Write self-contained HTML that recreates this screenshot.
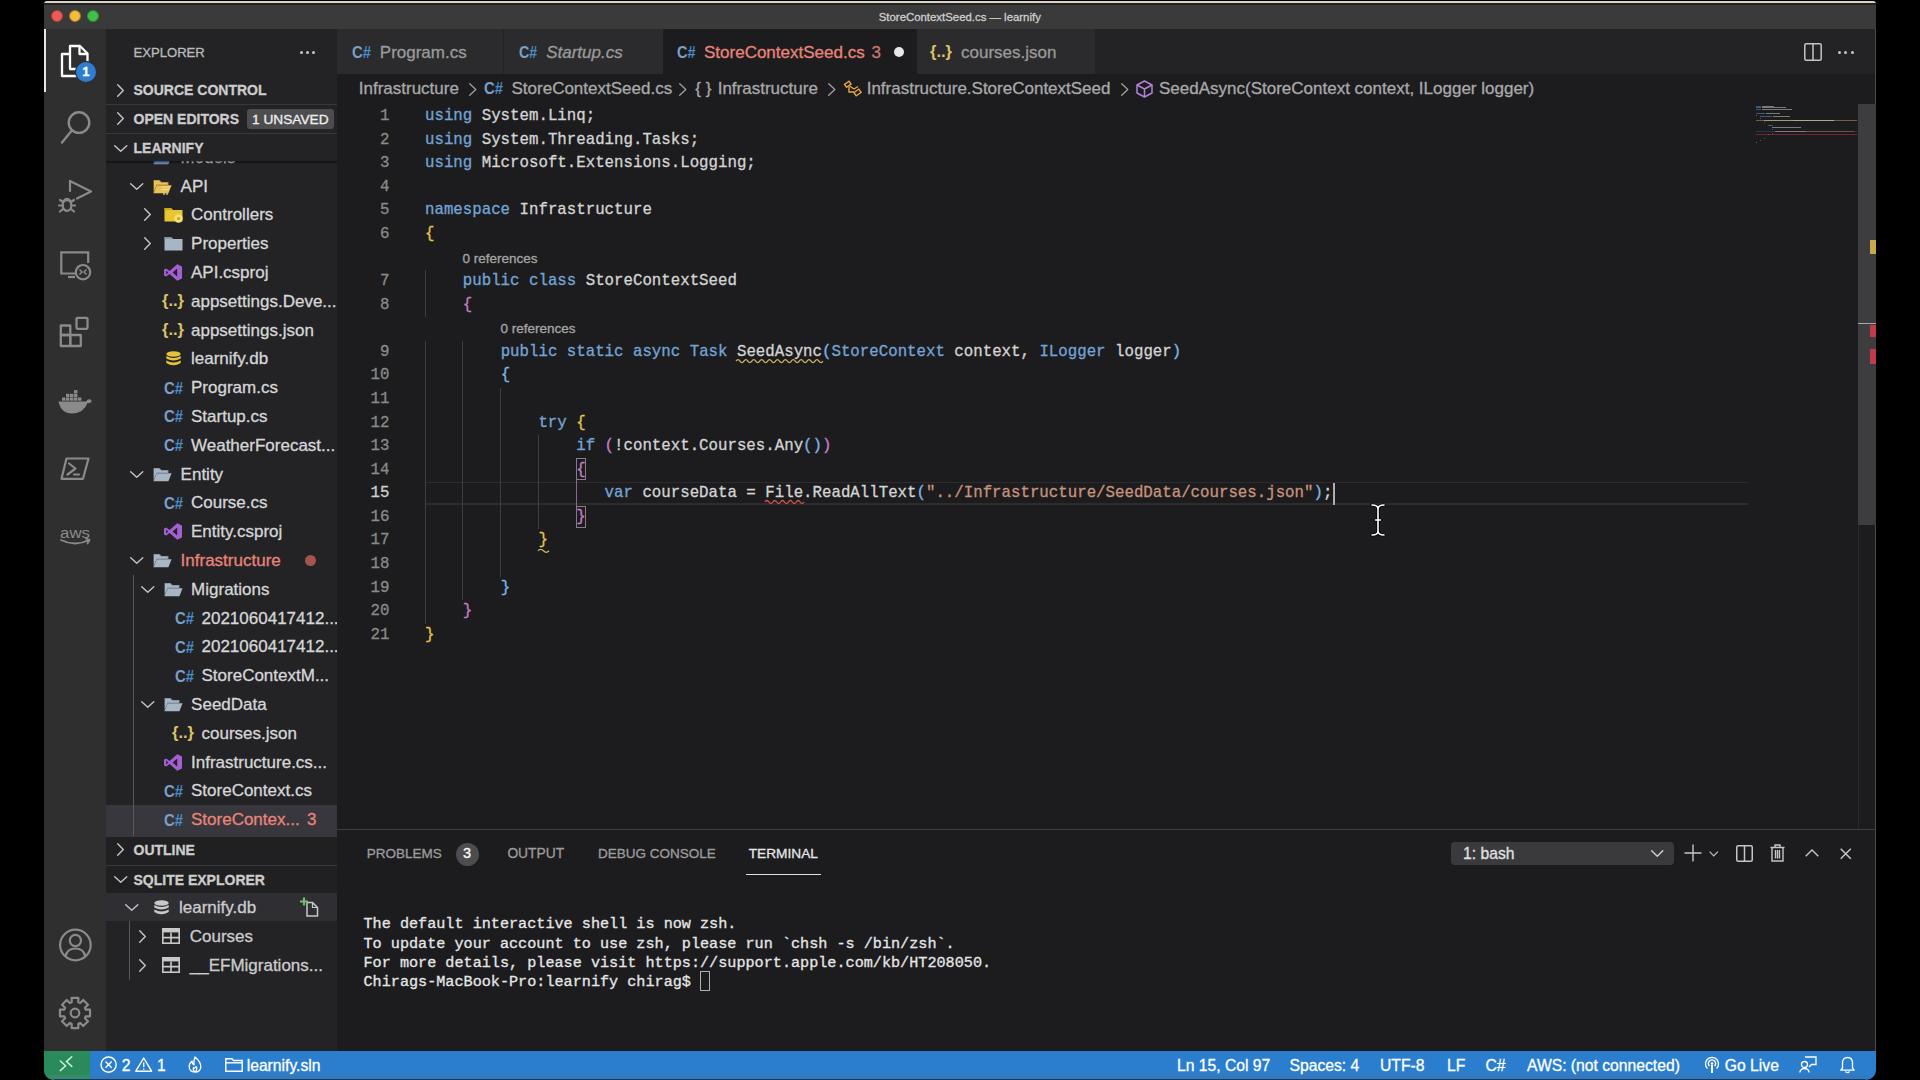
<!DOCTYPE html><html><head><meta charset="utf-8"><style>
html,body{margin:0;padding:0}
body{width:1920px;height:1080px;background:#000;position:relative;overflow:hidden;font-family:"Liberation Sans",sans-serif}
.t{position:absolute;white-space:pre;-webkit-text-stroke:0.3px currentColor}
.t span{-webkit-text-stroke:0.3px currentColor}
.r{position:absolute}
svg.r{overflow:visible}
</style></head><body>
<div class="r" style="left:44.00px;top:1.00px;width:1832.00px;height:1079.00px;background:#1c1c1e;border-radius:10px 10px 10px 10px;"></div>
<div class="r" style="left:44.00px;top:1.00px;width:1832.00px;height:3.00px;background:#d9d3bf;border-radius:10px 10px 0 0;"></div>
<div class="r" style="left:44.00px;top:3.00px;width:1832.00px;height:2.00px;background:#222;"></div>
<div class="r" style="left:44.00px;top:5.00px;width:1832.00px;height:24.00px;background:#3a3a3a;"></div>
<div class="r" style="left:50.8px;top:9.8px;width:12.4px;height:12.4px;box-sizing:border-box;border:0.8px solid #b03a36;border-radius:50%;background:#ee5a57"></div>
<div class="r" style="left:68.8px;top:9.8px;width:12.4px;height:12.4px;box-sizing:border-box;border:0.8px solid #a8782a;border-radius:50%;background:#f4b93f"></div>
<div class="r" style="left:86.8px;top:9.8px;width:12.4px;height:12.4px;box-sizing:border-box;border:0.8px solid #2a8a30;border-radius:50%;background:#40c04a"></div>
<div class="t" style="left:878.75px;top:11.95px;font-size:11.4px;line-height:11.4px;color:#cfcfcf;">StoreContextSeed.cs — learnify</div>
<div class="r" style="left:44.00px;top:29.00px;width:62.00px;height:1022.00px;background:#2f2f2f;"></div>
<div class="r" style="left:44.00px;top:29.00px;width:2.20px;height:63.00px;background:#e6e6e6;"></div>
<div class="r" style="left:106.00px;top:29.00px;width:231.00px;height:1022.00px;background:#232326;"></div>
<div class="r" style="left:337.00px;top:29.00px;width:1539.00px;height:45.00px;background:#232326;"></div>
<div class="r" style="left:337.00px;top:74.00px;width:1539.00px;height:755.00px;background:#1c1c1e;"></div>
<div class="r" style="left:337.00px;top:829.00px;width:1539.00px;height:222.00px;background:#1c1c1e;"></div>
<div class="r" style="left:337.00px;top:829.00px;width:1539.00px;height:1.00px;background:#3f3f40;"></div>
<div class="r" style="left:44.00px;top:1051.00px;width:1832.00px;height:29.00px;background:#2a7ecd;border-radius:0 0 10px 10px;"></div>
<div class="r" style="left:44.00px;top:1051.00px;width:45.50px;height:29.00px;background:#2b8a5c;border-radius:0 0 0 10px;"></div>
<div class="r" style="left:89.50px;top:1075.00px;width:1776.50px;height:3.60px;background:#3878b8;"></div>
<div class="r" style="left:54.00px;top:1078.60px;width:1812.00px;height:1.40px;background:#103e6a;"></div>
<div class="r" style="left:47.00px;top:1075.00px;width:42.50px;height:3.60px;background:#3a8a62;border-radius:0 0 0 8px;"></div>
<div class="t" style="left:133.50px;top:46.41px;font-size:13.1px;line-height:13.1px;color:#bbbbbb;">EXPLORER</div>
<div class="r" style="left:300.0px;top:50.5px;width:3px;height:3px;border-radius:50%;background:#c5c5c5"></div>
<div class="r" style="left:306.0px;top:50.5px;width:3px;height:3px;border-radius:50%;background:#c5c5c5"></div>
<div class="r" style="left:312.0px;top:50.5px;width:3px;height:3px;border-radius:50%;background:#c5c5c5"></div>
<svg class="r" style="left:117.00px;top:83.50px;" width="7" height="13" viewBox="0 0 7 13"><path d="M0.7 0.7 L6.3 6.5 L0.7 12.3" fill="none" stroke="#c5c5c5" stroke-width="1.4" stroke-linecap="round" stroke-linejoin="round"/></svg>
<div class="t" style="left:133.50px;top:83.15px;font-size:14px;line-height:14px;color:#cccccc;font-weight:700;">SOURCE CONTROL</div>
<div class="r" style="left:106.00px;top:104.00px;width:231.00px;height:1.00px;background:#38383a;"></div>
<svg class="r" style="left:117.00px;top:112.30px;" width="7" height="13" viewBox="0 0 7 13"><path d="M0.7 0.7 L6.3 6.5 L0.7 12.3" fill="none" stroke="#c5c5c5" stroke-width="1.4" stroke-linecap="round" stroke-linejoin="round"/></svg>
<div class="t" style="left:133.50px;top:111.90px;font-size:14px;line-height:14px;color:#cccccc;font-weight:700;">OPEN EDITORS</div>
<div class="r" style="left:247.00px;top:108.75px;width:87.00px;height:20.00px;background:#4d4d4f;border-radius:3px;"></div>
<div class="t" style="left:252.00px;top:113.15px;font-size:13.7px;line-height:13.7px;color:#f0f0f0;">1 UNSAVED</div>
<div class="r" style="left:106.00px;top:133.00px;width:231.00px;height:1.00px;background:#38383a;"></div>
<div class="r" style="left:106px;top:161px;width:231px;height:675px;overflow:hidden">
<div class="r" style="left:0.00px;top:644.00px;width:231.00px;height:30.60px;background:#37373d;"></div>
<div class="r" style="left:27.00px;top:414.00px;width:1.00px;height:261.00px;background:#585858;"></div>
<svg class="r" style="left:24.00px;top:-7.30px;" width="13.5" height="7" viewBox="0 0 13.5 7"><path d="M0.7 0.7 L6.75 6.3 L12.8 0.7" fill="none" stroke="#c5c5c5" stroke-width="1.4" stroke-linecap="round" stroke-linejoin="round"/></svg>
<svg class="r" style="left:47.00px;top:-11.30px;" width="19" height="15" viewBox="0 0 19 15"><path d="M0.5 1 H6.5 L8.5 3 H15.5 V6 H4 L0.5 13.5 Z" fill="#4f77a8"/><path d="M1 1.8 H6 L8 3.8 H14.7 V5.5 H3.6 L1 11.5 Z" fill="#6f97c8"/><path d="M3.8 6.3 H18.6 L15.4 14.2 H0.4 Z" fill="#6f97c8"/></svg>
<div class="t" style="left:74.60px;top:-12.19px;font-size:17px;line-height:17px;color:#d6d6d6;">Models</div>
<svg class="r" style="left:24.00px;top:21.50px;" width="13.5" height="7" viewBox="0 0 13.5 7"><path d="M0.7 0.7 L6.75 6.3 L12.8 0.7" fill="none" stroke="#c5c5c5" stroke-width="1.4" stroke-linecap="round" stroke-linejoin="round"/></svg>
<svg class="r" style="left:47.00px;top:17.50px;" width="19" height="16" viewBox="0 0 19 16"><path d="M0.5 1 H6.5 L8.5 3 H15.5 V6 H4 L0.5 13.5 Z" fill="#b38f2a"/><path d="M1 1.8 H6 L8 3.8 H14.7 V5.5 H3.6 L1 11.5 Z" fill="#e8c25a"/><path d="M3.8 6.3 H18.6 L15.4 14.2 H0.4 Z" fill="#e8c25a"/><path d="M9 8 H17 M9 10.5 H16 M11 14 V16 M14 14 V16" stroke="#f5dc8a" stroke-width="1.2"/></svg>
<div class="t" style="left:74.60px;top:16.61px;font-size:17px;line-height:17px;color:#d6d6d6;">API</div>
<svg class="r" style="left:38.00px;top:47.30px;" width="7" height="13" viewBox="0 0 7 13"><path d="M0.7 0.7 L6.3 6.5 L0.7 12.3" fill="none" stroke="#c5c5c5" stroke-width="1.4" stroke-linecap="round" stroke-linejoin="round"/></svg>
<svg class="r" style="left:57.50px;top:46.30px;" width="20" height="16" viewBox="0 0 20 16"><path d="M0.5 1 H7 L9 3 H18.5 V14.5 H0.5 Z" fill="#e9c631"/><path d="M0.5 1 H7 L9 3 H0.5 Z" fill="#c9a416"/><circle cx="14.5" cy="11.5" r="4.2" fill="#f3e27a"/><circle cx="14.5" cy="11.5" r="1.6" fill="#c9a416"/></svg>
<div class="t" style="left:85.10px;top:45.41px;font-size:17px;line-height:17px;color:#d6d6d6;">Controllers</div>
<svg class="r" style="left:38.00px;top:76.10px;" width="7" height="13" viewBox="0 0 7 13"><path d="M0.7 0.7 L6.3 6.5 L0.7 12.3" fill="none" stroke="#c5c5c5" stroke-width="1.4" stroke-linecap="round" stroke-linejoin="round"/></svg>
<svg class="r" style="left:57.50px;top:75.10px;" width="19" height="15" viewBox="0 0 19 15"><path d="M0.5 1 H7 L9 3 H18.5 V14.5 H0.5 Z" fill="#a7b6c4"/><path d="M0.5 1 H7 L9 3 H0.5 Z" fill="#8797a5"/></svg>
<div class="t" style="left:85.10px;top:74.21px;font-size:17px;line-height:17px;color:#d6d6d6;">Properties</div>
<svg class="r" style="left:58.00px;top:102.90px;" width="18" height="17" viewBox="0 0 18 17"><path d="M13.2 0.3 L18 2.4 V14.6 L13.2 16.7 L5.6 9.9 L2.2 12.5 L0 11.4 V5.6 L2.2 4.5 L5.6 7.1 Z M13.2 4.6 L8.6 8.5 L13.2 12.4 Z M2.2 6.6 V10.4 L4.2 8.5 Z" fill="#a45fd2" fill-rule="evenodd"/></svg>
<div class="t" style="left:85.00px;top:103.01px;font-size:17px;line-height:17px;color:#d6d6d6;">API.csproj</div>
<svg class="r" style="left:55.50px;top:131.20px;" width="22" height="18" viewBox="0 0 22 18"><text x="0" y="14" font-family="Liberation Sans" font-weight="700" font-size="17" fill="#dcc36a" textLength="22" lengthAdjust="spacingAndGlyphs">{..}</text></svg>
<div class="t" style="left:85.00px;top:131.81px;font-size:17px;line-height:17px;color:#d6d6d6;">appsettings.Deve...</div>
<svg class="r" style="left:55.50px;top:160.00px;" width="22" height="18" viewBox="0 0 22 18"><text x="0" y="14" font-family="Liberation Sans" font-weight="700" font-size="17" fill="#dcc36a" textLength="22" lengthAdjust="spacingAndGlyphs">{..}</text></svg>
<div class="t" style="left:85.00px;top:160.61px;font-size:17px;line-height:17px;color:#d6d6d6;">appsettings.json</div>
<svg class="r" style="left:59.50px;top:190.30px;" width="15" height="15" viewBox="0 0 15 15"><ellipse cx="7.5" cy="3" rx="7.2" ry="2.8" fill="#e6c23a"/><path d="M0.3 5 Q7.5 9 14.7 5 V7.5 Q7.5 11.5 0.3 7.5 Z M0.3 9.5 Q7.5 13.5 14.7 9.5 V12 Q7.5 16.5 0.3 12 Z" fill="#e6c23a"/></svg>
<div class="t" style="left:85.00px;top:189.41px;font-size:17px;line-height:17px;color:#d6d6d6;">learnify.db</div>
<svg class="r" style="left:58.00px;top:218.60px;" width="19" height="16" viewBox="0 0 19 16"><text x="0" y="14" font-family="Liberation Sans" font-weight="700" font-size="16.5" textLength="19" lengthAdjust="spacingAndGlyphs"><tspan fill="#7aa0c6">C</tspan><tspan fill="#4a8ecb">#</tspan></text></svg>
<div class="t" style="left:85.00px;top:218.21px;font-size:17px;line-height:17px;color:#d6d6d6;">Program.cs</div>
<svg class="r" style="left:58.00px;top:247.40px;" width="19" height="16" viewBox="0 0 19 16"><text x="0" y="14" font-family="Liberation Sans" font-weight="700" font-size="16.5" textLength="19" lengthAdjust="spacingAndGlyphs"><tspan fill="#7aa0c6">C</tspan><tspan fill="#4a8ecb">#</tspan></text></svg>
<div class="t" style="left:85.00px;top:247.01px;font-size:17px;line-height:17px;color:#d6d6d6;">Startup.cs</div>
<svg class="r" style="left:58.00px;top:276.20px;" width="19" height="16" viewBox="0 0 19 16"><text x="0" y="14" font-family="Liberation Sans" font-weight="700" font-size="16.5" textLength="19" lengthAdjust="spacingAndGlyphs"><tspan fill="#7aa0c6">C</tspan><tspan fill="#4a8ecb">#</tspan></text></svg>
<div class="t" style="left:85.00px;top:275.81px;font-size:17px;line-height:17px;color:#d6d6d6;">WeatherForecast...</div>
<svg class="r" style="left:24.00px;top:309.50px;" width="13.5" height="7" viewBox="0 0 13.5 7"><path d="M0.7 0.7 L6.75 6.3 L12.8 0.7" fill="none" stroke="#c5c5c5" stroke-width="1.4" stroke-linecap="round" stroke-linejoin="round"/></svg>
<svg class="r" style="left:47.00px;top:305.50px;" width="19" height="15" viewBox="0 0 19 15"><path d="M0.5 1 H6.5 L8.5 3 H15.5 V6 H4 L0.5 13.5 Z" fill="#7f8e9c"/><path d="M1 1.8 H6 L8 3.8 H14.7 V5.5 H3.6 L1 11.5 Z" fill="#a7b6c4"/><path d="M3.8 6.3 H18.6 L15.4 14.2 H0.4 Z" fill="#a7b6c4"/></svg>
<div class="t" style="left:74.60px;top:304.61px;font-size:17px;line-height:17px;color:#d6d6d6;">Entity</div>
<svg class="r" style="left:58.00px;top:333.80px;" width="19" height="16" viewBox="0 0 19 16"><text x="0" y="14" font-family="Liberation Sans" font-weight="700" font-size="16.5" textLength="19" lengthAdjust="spacingAndGlyphs"><tspan fill="#7aa0c6">C</tspan><tspan fill="#4a8ecb">#</tspan></text></svg>
<div class="t" style="left:85.00px;top:333.41px;font-size:17px;line-height:17px;color:#d6d6d6;">Course.cs</div>
<svg class="r" style="left:58.00px;top:362.10px;" width="18" height="17" viewBox="0 0 18 17"><path d="M13.2 0.3 L18 2.4 V14.6 L13.2 16.7 L5.6 9.9 L2.2 12.5 L0 11.4 V5.6 L2.2 4.5 L5.6 7.1 Z M13.2 4.6 L8.6 8.5 L13.2 12.4 Z M2.2 6.6 V10.4 L4.2 8.5 Z" fill="#a45fd2" fill-rule="evenodd"/></svg>
<div class="t" style="left:85.00px;top:362.21px;font-size:17px;line-height:17px;color:#d6d6d6;">Entity.csproj</div>
<svg class="r" style="left:24.00px;top:395.90px;" width="13.5" height="7" viewBox="0 0 13.5 7"><path d="M0.7 0.7 L6.75 6.3 L12.8 0.7" fill="none" stroke="#c5c5c5" stroke-width="1.4" stroke-linecap="round" stroke-linejoin="round"/></svg>
<svg class="r" style="left:47.00px;top:391.90px;" width="19" height="15" viewBox="0 0 19 15"><path d="M0.5 1 H6.5 L8.5 3 H15.5 V6 H4 L0.5 13.5 Z" fill="#7f8e9c"/><path d="M1 1.8 H6 L8 3.8 H14.7 V5.5 H3.6 L1 11.5 Z" fill="#a7b6c4"/><path d="M3.8 6.3 H18.6 L15.4 14.2 H0.4 Z" fill="#a7b6c4"/></svg>
<div class="t" style="left:74.60px;top:391.01px;font-size:17px;line-height:17px;color:#e8847a;">Infrastructure</div>
<div class="r" style="left:198.89999999999998px;top:393.5px;width:11px;height:11px;border-radius:50%;background:#a2544e"></div>
<svg class="r" style="left:34.50px;top:424.70px;" width="13.5" height="7" viewBox="0 0 13.5 7"><path d="M0.7 0.7 L6.75 6.3 L12.8 0.7" fill="none" stroke="#c5c5c5" stroke-width="1.4" stroke-linecap="round" stroke-linejoin="round"/></svg>
<svg class="r" style="left:57.50px;top:420.70px;" width="19" height="15" viewBox="0 0 19 15"><path d="M0.5 1 H6.5 L8.5 3 H15.5 V6 H4 L0.5 13.5 Z" fill="#7f8e9c"/><path d="M1 1.8 H6 L8 3.8 H14.7 V5.5 H3.6 L1 11.5 Z" fill="#a7b6c4"/><path d="M3.8 6.3 H18.6 L15.4 14.2 H0.4 Z" fill="#a7b6c4"/></svg>
<div class="t" style="left:85.10px;top:419.81px;font-size:17px;line-height:17px;color:#d6d6d6;">Migrations</div>
<svg class="r" style="left:68.50px;top:449.00px;" width="19" height="16" viewBox="0 0 19 16"><text x="0" y="14" font-family="Liberation Sans" font-weight="700" font-size="16.5" textLength="19" lengthAdjust="spacingAndGlyphs"><tspan fill="#7aa0c6">C</tspan><tspan fill="#4a8ecb">#</tspan></text></svg>
<div class="t" style="left:95.50px;top:448.61px;font-size:17px;line-height:17px;color:#d6d6d6;">2021060417412...</div>
<svg class="r" style="left:68.50px;top:477.80px;" width="19" height="16" viewBox="0 0 19 16"><text x="0" y="14" font-family="Liberation Sans" font-weight="700" font-size="16.5" textLength="19" lengthAdjust="spacingAndGlyphs"><tspan fill="#7aa0c6">C</tspan><tspan fill="#4a8ecb">#</tspan></text></svg>
<div class="t" style="left:95.50px;top:477.41px;font-size:17px;line-height:17px;color:#d6d6d6;">2021060417412...</div>
<svg class="r" style="left:68.50px;top:506.60px;" width="19" height="16" viewBox="0 0 19 16"><text x="0" y="14" font-family="Liberation Sans" font-weight="700" font-size="16.5" textLength="19" lengthAdjust="spacingAndGlyphs"><tspan fill="#7aa0c6">C</tspan><tspan fill="#4a8ecb">#</tspan></text></svg>
<div class="t" style="left:95.50px;top:506.21px;font-size:17px;line-height:17px;color:#d6d6d6;">StoreContextM...</div>
<svg class="r" style="left:34.50px;top:539.90px;" width="13.5" height="7" viewBox="0 0 13.5 7"><path d="M0.7 0.7 L6.75 6.3 L12.8 0.7" fill="none" stroke="#c5c5c5" stroke-width="1.4" stroke-linecap="round" stroke-linejoin="round"/></svg>
<svg class="r" style="left:57.50px;top:535.90px;" width="19" height="15" viewBox="0 0 19 15"><path d="M0.5 1 H6.5 L8.5 3 H15.5 V6 H4 L0.5 13.5 Z" fill="#7f8e9c"/><path d="M1 1.8 H6 L8 3.8 H14.7 V5.5 H3.6 L1 11.5 Z" fill="#a7b6c4"/><path d="M3.8 6.3 H18.6 L15.4 14.2 H0.4 Z" fill="#a7b6c4"/></svg>
<div class="t" style="left:85.10px;top:535.01px;font-size:17px;line-height:17px;color:#d6d6d6;">SeedData</div>
<svg class="r" style="left:66.00px;top:563.20px;" width="22" height="18" viewBox="0 0 22 18"><text x="0" y="14" font-family="Liberation Sans" font-weight="700" font-size="17" fill="#dcc36a" textLength="22" lengthAdjust="spacingAndGlyphs">{..}</text></svg>
<div class="t" style="left:95.50px;top:563.81px;font-size:17px;line-height:17px;color:#d6d6d6;">courses.json</div>
<svg class="r" style="left:58.00px;top:592.50px;" width="18" height="17" viewBox="0 0 18 17"><path d="M13.2 0.3 L18 2.4 V14.6 L13.2 16.7 L5.6 9.9 L2.2 12.5 L0 11.4 V5.6 L2.2 4.5 L5.6 7.1 Z M13.2 4.6 L8.6 8.5 L13.2 12.4 Z M2.2 6.6 V10.4 L4.2 8.5 Z" fill="#a45fd2" fill-rule="evenodd"/></svg>
<div class="t" style="left:85.00px;top:592.61px;font-size:17px;line-height:17px;color:#d6d6d6;">Infrastructure.cs...</div>
<svg class="r" style="left:58.00px;top:621.80px;" width="19" height="16" viewBox="0 0 19 16"><text x="0" y="14" font-family="Liberation Sans" font-weight="700" font-size="16.5" textLength="19" lengthAdjust="spacingAndGlyphs"><tspan fill="#7aa0c6">C</tspan><tspan fill="#4a8ecb">#</tspan></text></svg>
<div class="t" style="left:85.00px;top:621.41px;font-size:17px;line-height:17px;color:#d6d6d6;">StoreContext.cs</div>
<svg class="r" style="left:58.00px;top:650.60px;" width="19" height="16" viewBox="0 0 19 16"><text x="0" y="14" font-family="Liberation Sans" font-weight="700" font-size="16.5" textLength="19" lengthAdjust="spacingAndGlyphs"><tspan fill="#7aa0c6">C</tspan><tspan fill="#4a8ecb">#</tspan></text></svg>
<div class="t" style="left:85.00px;top:650.21px;font-size:17px;line-height:17px;color:#e8847a;">StoreContex...</div>
<div class="t" style="left:201.00px;top:650.21px;font-size:17px;line-height:17px;color:#e8847a;">3</div>
</div>
<div class="r" style="left:106.00px;top:161.00px;width:231.00px;height:3.00px;background:linear-gradient(#0000008c,#0000);"></div>
<div class="r" style="left:106.00px;top:134.00px;width:231.00px;height:27.00px;background:#232326;"></div>
<svg class="r" style="left:113.50px;top:145.00px;" width="13.5" height="7" viewBox="0 0 13.5 7"><path d="M0.7 0.7 L6.75 6.3 L12.8 0.7" fill="none" stroke="#c5c5c5" stroke-width="1.4" stroke-linecap="round" stroke-linejoin="round"/></svg>
<div class="t" style="left:133.50px;top:141.15px;font-size:14px;line-height:14px;color:#cccccc;font-weight:700;">LEARNIFY</div>
<div class="r" style="left:106.00px;top:836.00px;width:231.00px;height:28.50px;background:#202022;"></div>
<div class="r" style="left:106.00px;top:836.00px;width:231.00px;height:1.00px;background:#38383a;"></div>
<svg class="r" style="left:117.00px;top:843.00px;" width="7" height="13" viewBox="0 0 7 13"><path d="M0.7 0.7 L6.3 6.5 L0.7 12.3" fill="none" stroke="#c5c5c5" stroke-width="1.4" stroke-linecap="round" stroke-linejoin="round"/></svg>
<div class="t" style="left:133.50px;top:843.15px;font-size:14px;line-height:14px;color:#cccccc;font-weight:700;">OUTLINE</div>
<div class="r" style="left:106.00px;top:864.50px;width:231.00px;height:1.00px;background:#38383a;"></div>
<div class="r" style="left:106.00px;top:865.50px;width:231.00px;height:27.50px;background:#202022;"></div>
<svg class="r" style="left:113.50px;top:875.50px;" width="13.5" height="7" viewBox="0 0 13.5 7"><path d="M0.7 0.7 L6.75 6.3 L12.8 0.7" fill="none" stroke="#c5c5c5" stroke-width="1.4" stroke-linecap="round" stroke-linejoin="round"/></svg>
<div class="t" style="left:133.50px;top:872.55px;font-size:14px;line-height:14px;color:#cccccc;font-weight:700;">SQLITE EXPLORER</div>
<div class="r" style="left:106.00px;top:893.00px;width:231.00px;height:28.00px;background:#2f2f33;"></div>
<svg class="r" style="left:124.75px;top:903.50px;" width="13.5" height="7" viewBox="0 0 13.5 7"><path d="M0.7 0.7 L6.75 6.3 L12.8 0.7" fill="none" stroke="#c5c5c5" stroke-width="1.4" stroke-linecap="round" stroke-linejoin="round"/></svg>
<svg class="r" style="left:153.50px;top:899.50px;" width="15" height="15" viewBox="0 0 15 15"><ellipse cx="7.5" cy="3" rx="7.2" ry="2.8" fill="#c8c8c8"/><path d="M0.3 5 Q7.5 9 14.7 5 V7.5 Q7.5 11.5 0.3 7.5 Z M0.3 9.5 Q7.5 13.5 14.7 9.5 V12 Q7.5 16.5 0.3 12 Z" fill="#c8c8c8"/></svg>
<div class="t" style="left:179.00px;top:898.61px;font-size:17px;line-height:17px;color:#cccccc;">learnify.db</div>
<svg class="r" style="left:299.00px;top:897.00px;" width="20" height="20" viewBox="0 0 20 20"><path d="M8 5.5 H13.5 L18.5 10.5 V19 H8 Z" fill="none" stroke="#c8c8c8" stroke-width="1.5"/><path d="M13.5 5.5 V10.5 H18.5" fill="none" stroke="#c8c8c8" stroke-width="1.2"/><path d="M5 0.5 V8.5 M1 4.5 H9" stroke="#6cc06c" stroke-width="2.2"/></svg>
<div class="r" style="left:128.50px;top:921.00px;width:1.00px;height:59.00px;background:#585858;"></div>
<svg class="r" style="left:138.50px;top:929.50px;" width="7" height="13" viewBox="0 0 7 13"><path d="M0.7 0.7 L6.3 6.5 L0.7 12.3" fill="none" stroke="#c5c5c5" stroke-width="1.4" stroke-linecap="round" stroke-linejoin="round"/></svg>
<svg class="r" style="left:161.60px;top:928.00px;" width="18" height="16" viewBox="0 0 18 16"><rect x="0.8" y="0.8" width="16.4" height="14.4" fill="none" stroke="#c8c8c8" stroke-width="1.6"/><rect x="0.8" y="0.8" width="16.4" height="3.6" fill="#c8c8c8"/><path d="M9 4.4 V15.2 M0.8 9.6 H17.2" stroke="#c8c8c8" stroke-width="1.6"/></svg>
<div class="t" style="left:189.75px;top:927.61px;font-size:17px;line-height:17px;color:#cccccc;">Courses</div>
<svg class="r" style="left:138.50px;top:958.50px;" width="7" height="13" viewBox="0 0 7 13"><path d="M0.7 0.7 L6.3 6.5 L0.7 12.3" fill="none" stroke="#c5c5c5" stroke-width="1.4" stroke-linecap="round" stroke-linejoin="round"/></svg>
<svg class="r" style="left:161.60px;top:957.00px;" width="18" height="16" viewBox="0 0 18 16"><rect x="0.8" y="0.8" width="16.4" height="14.4" fill="none" stroke="#c8c8c8" stroke-width="1.6"/><rect x="0.8" y="0.8" width="16.4" height="3.6" fill="#c8c8c8"/><path d="M9 4.4 V15.2 M0.8 9.6 H17.2" stroke="#c8c8c8" stroke-width="1.6"/></svg>
<div class="t" style="left:189.75px;top:956.61px;font-size:17px;line-height:17px;color:#cccccc;">__EFMigrations...</div>
<div class="r" style="left:337.00px;top:29.00px;width:166.00px;height:45.00px;background:#2b2b2d;"></div>
<div class="r" style="left:503.00px;top:29.00px;width:159.50px;height:45.00px;background:#2b2b2d;"></div>
<div class="r" style="left:502.50px;top:29.00px;width:1.00px;height:45.00px;background:#232326;"></div>
<div class="r" style="left:662.50px;top:29.00px;width:254.50px;height:45.00px;background:#1c1c1e;"></div>
<div class="r" style="left:917.00px;top:29.00px;width:178.00px;height:45.00px;background:#2b2b2d;"></div>
<div class="r" style="left:1095.00px;top:29.00px;width:1.00px;height:45.00px;background:#232326;"></div>
<svg class="r" style="left:352.00px;top:44.00px;" width="19" height="16" viewBox="0 0 19 16"><text x="0" y="14" font-family="Liberation Sans" font-weight="700" font-size="16.5" textLength="19" lengthAdjust="spacingAndGlyphs"><tspan fill="#7aa0c6">C</tspan><tspan fill="#4a8ecb">#</tspan></text></svg>
<div class="t" style="left:379.80px;top:43.61px;font-size:17px;line-height:17px;color:#9a9a9a;">Program.cs</div>
<svg class="r" style="left:518.60px;top:44.00px;" width="18.2" height="16" viewBox="0 0 18.2 16"><text x="0" y="14" font-family="Liberation Sans" font-weight="700" font-size="16.5" textLength="18.2" lengthAdjust="spacingAndGlyphs"><tspan fill="#7aa0c6">C</tspan><tspan fill="#4a8ecb">#</tspan></text></svg>
<div class="t" style="left:546.20px;top:43.61px;font-size:17px;line-height:17px;color:#9a9a9a;font-style:italic;">Startup.cs</div>
<svg class="r" style="left:676.50px;top:44.00px;" width="18.5" height="16" viewBox="0 0 18.5 16"><text x="0" y="14" font-family="Liberation Sans" font-weight="700" font-size="16.5" textLength="18.5" lengthAdjust="spacingAndGlyphs"><tspan fill="#7aa0c6">C</tspan><tspan fill="#4a8ecb">#</tspan></text></svg>
<div class="t" style="left:704.00px;top:43.61px;font-size:17px;line-height:17px;color:#e8847a;">StoreContextSeed.cs</div>
<div class="t" style="left:871.50px;top:43.61px;font-size:17px;line-height:17px;color:#c8786f;">3</div>
<div class="r" style="left:894px;top:47px;width:10px;height:10px;border-radius:50%;background:#e8e8e8"></div>
<svg class="r" style="left:929.50px;top:43.00px;" width="22" height="18" viewBox="0 0 22 18"><text x="0" y="14" font-family="Liberation Sans" font-weight="700" font-size="17" fill="#dcc36a" textLength="22" lengthAdjust="spacingAndGlyphs">{..}</text></svg>
<div class="t" style="left:961.00px;top:43.61px;font-size:17px;line-height:17px;color:#9a9a9a;">courses.json</div>
<svg class="r" style="left:1803.75px;top:43.00px;" width="18" height="18" viewBox="0 0 18 18"><rect x="0.8" y="0.8" width="16.4" height="16.4" rx="1.5" fill="none" stroke="#c5c5c5" stroke-width="1.5"/><path d="M9 0.8 V17.2" stroke="#c5c5c5" stroke-width="1.5"/></svg>
<div class="r" style="left:1837.5px;top:50.5px;width:3px;height:3px;border-radius:50%;background:#c5c5c5"></div>
<div class="r" style="left:1844.0px;top:50.5px;width:3px;height:3px;border-radius:50%;background:#c5c5c5"></div>
<div class="r" style="left:1850.5px;top:50.5px;width:3px;height:3px;border-radius:50%;background:#c5c5c5"></div>
<div class="t" style="left:358.75px;top:80.21px;font-size:17px;line-height:17px;color:#a9a9a9;">Infrastructure</div>
<svg class="r" style="left:469.00px;top:82.50px;" width="7.5" height="13" viewBox="0 0 7.5 13"><path d="M0.7 0.7 L6.8 6.5 L0.7 12.3" fill="none" stroke="#a0a0a0" stroke-width="1.3" stroke-linecap="round" stroke-linejoin="round"/></svg>
<svg class="r" style="left:484.00px;top:80.00px;" width="19" height="16" viewBox="0 0 19 16"><text x="0" y="14" font-family="Liberation Sans" font-weight="700" font-size="16.5" textLength="19" lengthAdjust="spacingAndGlyphs"><tspan fill="#7aa0c6">C</tspan><tspan fill="#4a8ecb">#</tspan></text></svg>
<div class="t" style="left:511.50px;top:80.21px;font-size:17px;line-height:17px;color:#a9a9a9;">StoreContextSeed.cs</div>
<svg class="r" style="left:679.00px;top:82.50px;" width="7.5" height="13" viewBox="0 0 7.5 13"><path d="M0.7 0.7 L6.8 6.5 L0.7 12.3" fill="none" stroke="#a0a0a0" stroke-width="1.3" stroke-linecap="round" stroke-linejoin="round"/></svg>
<div class="t" style="left:695.30px;top:80.21px;font-size:17px;line-height:17px;color:#a9a9a9;">{ }</div>
<div class="t" style="left:717.70px;top:80.21px;font-size:17px;line-height:17px;color:#a9a9a9;">Infrastructure</div>
<svg class="r" style="left:828.00px;top:82.50px;" width="7.5" height="13" viewBox="0 0 7.5 13"><path d="M0.7 0.7 L6.8 6.5 L0.7 12.3" fill="none" stroke="#a0a0a0" stroke-width="1.3" stroke-linecap="round" stroke-linejoin="round"/></svg>
<svg class="r" style="left:843.75px;top:80.00px;" width="18" height="18" viewBox="0 0 18 18"><g fill="none" stroke="#e8a544" stroke-width="1.4"><rect x="1" y="2.5" width="5.5" height="3.5" transform="rotate(-35 3.7 4.2)"/><path d="M5.5 6 L10 9 M10 9 L14 6.5"/><rect x="10.5" y="10.5" width="6" height="4" transform="rotate(-35 13.5 12.5)"/><path d="M5 7 V12 H10"/></g></svg>
<div class="t" style="left:866.70px;top:80.21px;font-size:17px;line-height:17px;color:#a9a9a9;">Infrastructure.StoreContextSeed</div>
<svg class="r" style="left:1120.60px;top:82.50px;" width="7.5" height="13" viewBox="0 0 7.5 13"><path d="M0.7 0.7 L6.8 6.5 L0.7 12.3" fill="none" stroke="#a0a0a0" stroke-width="1.3" stroke-linecap="round" stroke-linejoin="round"/></svg>
<svg class="r" style="left:1136.00px;top:80.00px;" width="17" height="18" viewBox="0 0 17 18"><g fill="none" stroke="#b180d7" stroke-width="1.5" stroke-linejoin="round"><path d="M8.5 1 L16 5 V13 L8.5 17 L1 13 V5 Z"/><path d="M1 5 L8.5 9 L16 5 M8.5 9 V17"/></g></svg>
<div class="t" style="left:1159.00px;top:80.21px;font-size:17px;line-height:17px;color:#a9a9a9;">SeedAsync(StoreContext context, ILogger logger)</div>
<div class="r" style="left:426.00px;top:481.50px;width:1322.00px;height:1.60px;background:#2c2c2e;"></div>
<div class="r" style="left:426.00px;top:503.20px;width:1322.00px;height:1.60px;background:#2c2c2e;"></div>
<div class="r" style="left:425.00px;top:270.06px;width:1.00px;height:47.16px;background:#3e3e40;"></div>
<div class="r" style="left:425.00px;top:340.80px;width:1.00px;height:282.96px;background:#3e3e40;"></div>
<div class="r" style="left:462.00px;top:340.80px;width:1.00px;height:259.38px;background:#3e3e40;"></div>
<div class="r" style="left:500.00px;top:387.96px;width:1.00px;height:188.64px;background:#3e3e40;"></div>
<div class="r" style="left:538.00px;top:435.12px;width:1.00px;height:94.32px;background:#3e3e40;"></div>
<div class="r" style="left:576.25px;top:457.50px;width:9.50px;height:22.50px;background:transparent;box-sizing:border-box;border:1px solid #8a7a8a;"></div>
<div class="r" style="left:576.25px;top:505.60px;width:9.50px;height:22.50px;background:transparent;box-sizing:border-box;border:1px solid #8a7a8a;"></div>
<div class="r" style="left:576.25px;top:480.00px;width:1.00px;height:25.60px;background:#8a6a8a;"></div>
<div class="t" style="left:425px;top:105.00px;font-family:'Liberation Mono', monospace;font-size:15.76px;line-height:23.58px;height:23.58px"><span style="color:#74a4d6">using</span><span style="color:#d4d4d4"> System.Linq;</span></div>
<div class="t" style="left:425px;top:128.58px;font-family:'Liberation Mono', monospace;font-size:15.76px;line-height:23.58px;height:23.58px"><span style="color:#74a4d6">using</span><span style="color:#d4d4d4"> System.Threading.Tasks;</span></div>
<div class="t" style="left:425px;top:152.16px;font-family:'Liberation Mono', monospace;font-size:15.76px;line-height:23.58px;height:23.58px"><span style="color:#74a4d6">using</span><span style="color:#d4d4d4"> Microsoft.Extensions.Logging;</span></div>
<div class="t" style="left:425px;top:175.74px;font-family:'Liberation Mono', monospace;font-size:15.76px;line-height:23.58px;height:23.58px"></div>
<div class="t" style="left:425px;top:199.32px;font-family:'Liberation Mono', monospace;font-size:15.76px;line-height:23.58px;height:23.58px"><span style="color:#74a4d6">namespace</span><span style="color:#d4d4d4"> Infrastructure</span></div>
<div class="t" style="left:425px;top:222.90px;font-family:'Liberation Mono', monospace;font-size:15.76px;line-height:23.58px;height:23.58px"><span style="color:#e3c54a">{</span></div>
<div class="t" style="left:425px;top:270.06px;font-family:'Liberation Mono', monospace;font-size:15.76px;line-height:23.58px;height:23.58px"><span style="color:#d4d4d4">    </span><span style="color:#74a4d6">public</span><span style="color:#d4d4d4"> </span><span style="color:#74a4d6">class</span><span style="color:#d4d4d4"> StoreContextSeed</span></div>
<div class="t" style="left:425px;top:293.64px;font-family:'Liberation Mono', monospace;font-size:15.76px;line-height:23.58px;height:23.58px"><span style="color:#d4d4d4">    </span><span style="color:#c77cc7">{</span></div>
<div class="t" style="left:425px;top:340.80px;font-family:'Liberation Mono', monospace;font-size:15.76px;line-height:23.58px;height:23.58px"><span style="color:#d4d4d4">        </span><span style="color:#74a4d6">public</span><span style="color:#d4d4d4"> </span><span style="color:#74a4d6">static</span><span style="color:#d4d4d4"> </span><span style="color:#74a4d6">async</span><span style="color:#d4d4d4"> </span><span style="color:#74a4d6">Task</span><span style="color:#d4d4d4"> SeedAsync</span><span style="color:#7db6e8">(</span><span style="color:#74a4d6">StoreContext</span><span style="color:#d4d4d4"> context, </span><span style="color:#74a4d6">ILogger</span><span style="color:#d4d4d4"> logger</span><span style="color:#7db6e8">)</span></div>
<div class="t" style="left:425px;top:364.38px;font-family:'Liberation Mono', monospace;font-size:15.76px;line-height:23.58px;height:23.58px"><span style="color:#d4d4d4">        </span><span style="color:#7db6e8">{</span></div>
<div class="t" style="left:425px;top:387.96px;font-family:'Liberation Mono', monospace;font-size:15.76px;line-height:23.58px;height:23.58px"></div>
<div class="t" style="left:425px;top:411.54px;font-family:'Liberation Mono', monospace;font-size:15.76px;line-height:23.58px;height:23.58px"><span style="color:#d4d4d4">            </span><span style="color:#74a4d6">try</span><span style="color:#d4d4d4"> </span><span style="color:#e3c54a">{</span></div>
<div class="t" style="left:425px;top:435.12px;font-family:'Liberation Mono', monospace;font-size:15.76px;line-height:23.58px;height:23.58px"><span style="color:#d4d4d4">                </span><span style="color:#74a4d6">if</span><span style="color:#d4d4d4"> </span><span style="color:#c77cc7">(</span><span style="color:#d4d4d4">!context.Courses.Any</span><span style="color:#7db6e8">()</span><span style="color:#c77cc7">)</span></div>
<div class="t" style="left:425px;top:458.70px;font-family:'Liberation Mono', monospace;font-size:15.76px;line-height:23.58px;height:23.58px"><span style="color:#d4d4d4">                </span><span style="color:#c77cc7">{</span></div>
<div class="t" style="left:425px;top:482.28px;font-family:'Liberation Mono', monospace;font-size:15.76px;line-height:23.58px;height:23.58px"><span style="color:#d4d4d4">                   </span><span style="color:#74a4d6">var</span><span style="color:#d4d4d4"> courseData = File.ReadAllText</span><span style="color:#7db6e8">(</span><span style="color:#c8937c">&quot;../Infrastructure/SeedData/courses.json&quot;</span><span style="color:#7db6e8">)</span><span style="color:#d4d4d4">;</span></div>
<div class="t" style="left:425px;top:505.86px;font-family:'Liberation Mono', monospace;font-size:15.76px;line-height:23.58px;height:23.58px"><span style="color:#d4d4d4">                </span><span style="color:#c77cc7">}</span></div>
<div class="t" style="left:425px;top:529.44px;font-family:'Liberation Mono', monospace;font-size:15.76px;line-height:23.58px;height:23.58px"><span style="color:#d4d4d4">            </span><span style="color:#e3c54a">}</span></div>
<div class="t" style="left:425px;top:553.02px;font-family:'Liberation Mono', monospace;font-size:15.76px;line-height:23.58px;height:23.58px"></div>
<div class="t" style="left:425px;top:576.60px;font-family:'Liberation Mono', monospace;font-size:15.76px;line-height:23.58px;height:23.58px"><span style="color:#d4d4d4">        </span><span style="color:#7db6e8">}</span></div>
<div class="t" style="left:425px;top:600.18px;font-family:'Liberation Mono', monospace;font-size:15.76px;line-height:23.58px;height:23.58px"><span style="color:#d4d4d4">    </span><span style="color:#c77cc7">}</span></div>
<div class="t" style="left:425px;top:623.76px;font-family:'Liberation Mono', monospace;font-size:15.76px;line-height:23.58px;height:23.58px"><span style="color:#e3c54a">}</span></div>
<div class="t" style="left:330px;width:59.5px;text-align:right;top:105.00px;font-family:'Liberation Mono', monospace;font-size:15.76px;line-height:23.58px;color:#8a8a8a">1</div>
<div class="t" style="left:330px;width:59.5px;text-align:right;top:128.58px;font-family:'Liberation Mono', monospace;font-size:15.76px;line-height:23.58px;color:#8a8a8a">2</div>
<div class="t" style="left:330px;width:59.5px;text-align:right;top:152.16px;font-family:'Liberation Mono', monospace;font-size:15.76px;line-height:23.58px;color:#8a8a8a">3</div>
<div class="t" style="left:330px;width:59.5px;text-align:right;top:175.74px;font-family:'Liberation Mono', monospace;font-size:15.76px;line-height:23.58px;color:#8a8a8a">4</div>
<div class="t" style="left:330px;width:59.5px;text-align:right;top:199.32px;font-family:'Liberation Mono', monospace;font-size:15.76px;line-height:23.58px;color:#8a8a8a">5</div>
<div class="t" style="left:330px;width:59.5px;text-align:right;top:222.90px;font-family:'Liberation Mono', monospace;font-size:15.76px;line-height:23.58px;color:#8a8a8a">6</div>
<div class="t" style="left:330px;width:59.5px;text-align:right;top:270.06px;font-family:'Liberation Mono', monospace;font-size:15.76px;line-height:23.58px;color:#8a8a8a">7</div>
<div class="t" style="left:330px;width:59.5px;text-align:right;top:293.64px;font-family:'Liberation Mono', monospace;font-size:15.76px;line-height:23.58px;color:#8a8a8a">8</div>
<div class="t" style="left:330px;width:59.5px;text-align:right;top:340.80px;font-family:'Liberation Mono', monospace;font-size:15.76px;line-height:23.58px;color:#8a8a8a">9</div>
<div class="t" style="left:330px;width:59.5px;text-align:right;top:364.38px;font-family:'Liberation Mono', monospace;font-size:15.76px;line-height:23.58px;color:#8a8a8a">10</div>
<div class="t" style="left:330px;width:59.5px;text-align:right;top:387.96px;font-family:'Liberation Mono', monospace;font-size:15.76px;line-height:23.58px;color:#8a8a8a">11</div>
<div class="t" style="left:330px;width:59.5px;text-align:right;top:411.54px;font-family:'Liberation Mono', monospace;font-size:15.76px;line-height:23.58px;color:#8a8a8a">12</div>
<div class="t" style="left:330px;width:59.5px;text-align:right;top:435.12px;font-family:'Liberation Mono', monospace;font-size:15.76px;line-height:23.58px;color:#8a8a8a">13</div>
<div class="t" style="left:330px;width:59.5px;text-align:right;top:458.70px;font-family:'Liberation Mono', monospace;font-size:15.76px;line-height:23.58px;color:#8a8a8a">14</div>
<div class="t" style="left:330px;width:59.5px;text-align:right;top:482.28px;font-family:'Liberation Mono', monospace;font-size:15.76px;line-height:23.58px;color:#d0d0d0">15</div>
<div class="t" style="left:330px;width:59.5px;text-align:right;top:505.86px;font-family:'Liberation Mono', monospace;font-size:15.76px;line-height:23.58px;color:#8a8a8a">16</div>
<div class="t" style="left:330px;width:59.5px;text-align:right;top:529.44px;font-family:'Liberation Mono', monospace;font-size:15.76px;line-height:23.58px;color:#8a8a8a">17</div>
<div class="t" style="left:330px;width:59.5px;text-align:right;top:553.02px;font-family:'Liberation Mono', monospace;font-size:15.76px;line-height:23.58px;color:#8a8a8a">18</div>
<div class="t" style="left:330px;width:59.5px;text-align:right;top:576.60px;font-family:'Liberation Mono', monospace;font-size:15.76px;line-height:23.58px;color:#8a8a8a">19</div>
<div class="t" style="left:330px;width:59.5px;text-align:right;top:600.18px;font-family:'Liberation Mono', monospace;font-size:15.76px;line-height:23.58px;color:#8a8a8a">20</div>
<div class="t" style="left:330px;width:59.5px;text-align:right;top:623.76px;font-family:'Liberation Mono', monospace;font-size:15.76px;line-height:23.58px;color:#8a8a8a">21</div>
<div class="t" style="left:462.50px;top:251.77px;font-size:13.5px;line-height:13.5px;color:#a6a6a6;">0 references</div>
<div class="t" style="left:500.50px;top:321.57px;font-size:13.5px;line-height:13.5px;color:#a6a6a6;">0 references</div>
<svg class="r" style="left:0.00px;top:0.00px;" width="1" height="1" viewBox="0 0 1 1"><path d="M736 361.2 q1.98 -3 3.95 0 q1.98 3 3.95 0 q1.98 -3 3.95 0 q1.98 3 3.95 0 q1.98 -3 3.95 0 q1.98 3 3.95 0 q1.98 -3 3.95 0 q1.98 3 3.95 0 q1.98 -3 3.95 0 q1.98 3 3.95 0 q1.98 -3 3.95 0 q1.98 3 3.95 0 q1.98 -3 3.95 0 q1.98 3 3.95 0 q1.98 -3 3.95 0 q1.98 3 3.95 0 q1.98 -3 3.95 0 q1.98 3 3.95 0 q1.98 -3 3.95 0 q1.98 3 3.95 0 q1.98 -3 3.95 0 q1.98 3 3.95 0" fill="none" stroke="#cdb462" stroke-width="1.3"/></svg>
<svg class="r" style="left:0.00px;top:0.00px;" width="1" height="1" viewBox="0 0 1 1"><path d="M765 502 q1.95 -3 3.90 0 q1.95 3 3.90 0 q1.95 -3 3.90 0 q1.95 3 3.90 0 q1.95 -3 3.90 0 q1.95 3 3.90 0 q1.95 -3 3.90 0 q1.95 3 3.90 0 q1.95 -3 3.90 0 q1.95 3 3.90 0" fill="none" stroke="#d8584c" stroke-width="1.3"/></svg>
<svg class="r" style="left:0.00px;top:0.00px;" width="1" height="1" viewBox="0 0 1 1"><path d="M538 550.8 q2.75 -3 5.50 0 q2.75 3 5.50 0" fill="none" stroke="#cdb462" stroke-width="1.3"/></svg>
<div class="r" style="left:1332.50px;top:482.78px;width:2.00px;height:22.50px;background:#aeafad;"></div>
<svg class="r" style="left:1369.00px;top:503.00px;" width="18" height="34" viewBox="0 0 18 34"><g fill="none" stroke="#000" stroke-width="3.2" stroke-linecap="round"><path d="M3 2 Q9 2 9 6 V28 Q9 32 3 32 M15 2 Q9 2 9 6 M9 28 Q9 32 15 32 M6.5 17 H11.5"/></g><g fill="none" stroke="#fff" stroke-width="1.6" stroke-linecap="round"><path d="M3 2 Q9 2 9 6 V28 Q9 32 3 32 M15 2 Q9 2 9 6 M9 28 Q9 32 15 32 M6.5 17 H11.5"/></g></svg>
<div class="r" style="left:1756.00px;top:105.50px;width:5.10px;height:1.00px;background:#3d5c7c;"></div>
<div class="r" style="left:1762.12px;top:105.50px;width:12.24px;height:1.00px;background:#7a7a7a;"></div>
<div class="r" style="left:1756.00px;top:107.30px;width:5.10px;height:1.00px;background:#3d5c7c;"></div>
<div class="r" style="left:1762.12px;top:107.30px;width:23.46px;height:1.00px;background:#7a7a7a;"></div>
<div class="r" style="left:1756.00px;top:109.10px;width:5.10px;height:1.00px;background:#3d5c7c;"></div>
<div class="r" style="left:1762.12px;top:109.10px;width:29.58px;height:1.00px;background:#7a7a7a;"></div>
<div class="r" style="left:1756.00px;top:112.70px;width:9.18px;height:1.00px;background:#3d5c7c;"></div>
<div class="r" style="left:1766.20px;top:112.70px;width:14.28px;height:1.00px;background:#7a7a7a;"></div>
<div class="r" style="left:1756.00px;top:114.50px;width:1.02px;height:1.00px;background:#7a6a30;"></div>
<div class="r" style="left:1760.08px;top:116.30px;width:12.24px;height:1.00px;background:#3d5c7c;"></div>
<div class="r" style="left:1773.34px;top:116.30px;width:16.32px;height:1.00px;background:#7a7a7a;"></div>
<div class="r" style="left:1760.08px;top:118.10px;width:1.02px;height:1.00px;background:#6a4a6a;"></div>
<div class="r" style="left:1756.00px;top:119.80px;width:101.00px;height:1.30px;background:#6e6236;"></div>
<div class="r" style="left:1764.16px;top:119.90px;width:28.56px;height:1.00px;background:#a09a70;"></div>
<div class="r" style="left:1792.72px;top:119.90px;width:40.80px;height:1.00px;background:#b0aa80;"></div>
<div class="r" style="left:1764.16px;top:121.70px;width:1.02px;height:1.00px;background:#3a5a7a;"></div>
<div class="r" style="left:1768.24px;top:125.30px;width:5.10px;height:1.00px;background:#3d5c7c;"></div>
<div class="r" style="left:1772.32px;top:127.10px;width:28.56px;height:1.00px;background:#7a7a7a;"></div>
<div class="r" style="left:1772.32px;top:128.90px;width:1.02px;height:1.00px;background:#6a4a6a;"></div>
<div class="r" style="left:1756.00px;top:130.60px;width:101.00px;height:1.30px;background:#25384e;"></div>
<div class="r" style="left:1775.38px;top:130.70px;width:30.60px;height:1.00px;background:#7a7a7a;"></div>
<div class="r" style="left:1805.98px;top:130.70px;width:47.94px;height:1.00px;background:#6a5448;"></div>
<div class="r" style="left:1756.00px;top:134.20px;width:101.00px;height:1.30px;background:#6e2432;"></div>
<div class="r" style="left:1772.32px;top:132.50px;width:1.02px;height:1.00px;background:#6a4a6a;"></div>
<div class="r" style="left:1768.24px;top:134.30px;width:1.02px;height:1.00px;background:#7a6a30;"></div>
<div class="r" style="left:1764.16px;top:137.90px;width:1.02px;height:1.00px;background:#3a5a7a;"></div>
<div class="r" style="left:1760.08px;top:139.70px;width:1.02px;height:1.00px;background:#6a4a6a;"></div>
<div class="r" style="left:1756.00px;top:141.50px;width:1.02px;height:1.00px;background:#7a6a30;"></div>
<div class="r" style="left:1857.50px;top:103.70px;width:1.00px;height:725.00px;background:#2a2a2c;"></div>
<div class="r" style="left:1875.00px;top:29.00px;width:1.00px;height:1022.00px;background:#4a4a4c;"></div>
<div class="r" style="left:1858.00px;top:103.70px;width:18.00px;height:421.00px;background:#3d3d3f;"></div>
<div class="r" style="left:1869.60px;top:239.60px;width:6.40px;height:14.40px;background:#c9a94a;"></div>
<div class="r" style="left:1858.00px;top:322.50px;width:18.00px;height:1.50px;background:#a8a8a8;"></div>
<div class="r" style="left:1869.60px;top:324.80px;width:6.40px;height:12.20px;background:#c03a4a;"></div>
<div class="r" style="left:1869.60px;top:349.00px;width:6.40px;height:14.70px;background:#c03a4a;"></div>
<svg class="r" style="left:58.00px;top:44.00px;" width="34" height="34" viewBox="0 0 34 34"><g fill="none" stroke="#ffffff" stroke-width="2.3" stroke-linejoin="round"><path d="M12 2 H22 L29.5 9.5 V25 H12 Z"/><path d="M21.5 2 V10 H29.5"/><path d="M12 10 H4 V32 H21 V25"/></g></svg>
<div class="r" style="left:75px;top:60.5px;width:22.5px;height:22.5px;border-radius:50%;background:#2f2f2f"></div>
<div class="r" style="left:76.2px;top:61.7px;width:20px;height:20px;border-radius:50%;background:#2f7dd1"></div>
<div class="t" style="left:82.20px;top:65.49px;font-size:13px;line-height:13px;color:#ffffff;font-weight:700;">1</div>
<svg class="r" style="left:58.00px;top:108.00px;" width="36" height="38" viewBox="0 0 36 38"><g fill="none" stroke="#8a8a8a" stroke-width="2.4" stroke-linecap="round"><circle cx="21" cy="14.6" r="10.3"/><path d="M13.8 22.5 L4 34.5"/></g></svg>
<svg class="r" style="left:56.00px;top:178.00px;" width="38" height="36" viewBox="0 0 38 36"><g fill="none" stroke="#8a8a8a" stroke-width="2.2" stroke-linejoin="round" stroke-linecap="round"><path d="M14 3 L35 13.5 L21 20.5"/><path d="M14 3 V13"/><ellipse cx="11" cy="27.5" rx="4.3" ry="5.3"/><path d="M8 22.5 Q11 19 14 22.5 M6.7 27.5 H3 M15.3 27.5 H19 M7 24 L4 22 M15 24 L18 22 M7 31 L4 33.5 M15 31 L18 33.5"/></g></svg>
<svg class="r" style="left:58.00px;top:249.00px;" width="36" height="34" viewBox="0 0 36 34"><g fill="none" stroke="#8a8a8a" stroke-width="2.2"><path d="M17 24.5 H3.3 V3.3 H30.2 V14"/><path d="M10 28 H17"/><circle cx="25" cy="23.2" r="7.2"/><path d="M21.5 20.5 L24 23 L21.5 25.5 M28.5 20.5 L26 23 L28.5 25.5" stroke-width="1.5"/></g></svg>
<svg class="r" style="left:58.00px;top:315.00px;" width="34" height="35" viewBox="0 0 34 35"><g fill="none" stroke="#8a8a8a" stroke-width="2.3" stroke-linejoin="round"><rect x="2.8" y="10.5" width="9.5" height="9.5"/><rect x="2.8" y="20" width="9.5" height="11"/><rect x="12.3" y="20" width="10.5" height="11"/><rect x="18.5" y="2.8" width="11" height="11" rx="1"/></g></svg>
<svg class="r" style="left:56.00px;top:388.00px;" width="38" height="28" viewBox="0 0 38 28"><g fill="#8a8a8a"><path d="M2.5 13.5 H30 Q32 10.5 34.5 11.5 Q36 12.5 35.5 14 Q34 15.5 31.5 15 Q28 25 16 25.5 Q5 25.5 2.5 13.5 Z"/><rect x="6" y="9.5" width="3.4" height="3.2"/><rect x="10" y="9.5" width="3.4" height="3.2"/><rect x="14" y="9.5" width="3.4" height="3.2"/><rect x="18" y="9.5" width="3.4" height="3.2"/><rect x="22" y="9.5" width="3.4" height="3.2"/><rect x="10" y="5.8" width="3.4" height="3.2"/><rect x="14" y="5.8" width="3.4" height="3.2"/><rect x="18" y="5.8" width="3.4" height="3.2"/><rect x="18" y="2.1" width="3.4" height="3.2"/></g></svg>
<svg class="r" style="left:58.00px;top:455.00px;" width="34" height="28" viewBox="0 0 34 28"><g fill="none" stroke="#8a8a8a" stroke-width="2.2" stroke-linejoin="round" stroke-linecap="round"><path d="M8.5 3.5 H30.5 L25 23.8 H3.5 Z"/><path d="M11 8.5 L17.5 13.5 L9.5 19.5 M16 19.5 H21"/></g></svg>
<svg class="r" style="left:58.00px;top:525.00px;" width="34" height="24" viewBox="0 0 34 24"><text x="2" y="12.5" font-family="Liberation Sans" font-size="15.5" fill="#8a8a8a" textLength="30" lengthAdjust="spacingAndGlyphs">aws</text><path d="M3 15 Q17 22 31 15 M28 13.5 L31.5 15 L29.5 18.5" fill="none" stroke="#8a8a8a" stroke-width="1.8" stroke-linecap="round"/></svg>
<svg class="r" style="left:58.00px;top:927.00px;" width="36" height="36" viewBox="0 0 36 36"><g fill="none" stroke="#8a8a8a" stroke-width="2.2"><circle cx="17.4" cy="18" r="15.3"/><circle cx="17.4" cy="13.5" r="5.6"/><path d="M7.5 29.5 Q9 21.5 17.4 21.5 Q25.8 21.5 27.3 29.5"/></g></svg>
<svg class="r" style="left:57.00px;top:995.00px;" width="36" height="36" viewBox="0 0 36 36"><g fill="none" stroke="#8a8a8a" stroke-width="2.2" stroke-linejoin="round"><path d="M33.03 14.64 L33.03 21.36 L28.70 21.31 L27.91 23.23 L31.00 26.25 L26.25 31.00 L23.23 27.91 L21.31 28.70 L21.36 33.03 L14.64 33.03 L14.69 28.70 L12.77 27.91 L9.75 31.00 L5.00 26.25 L8.09 23.23 L7.30 21.31 L2.97 21.36 L2.97 14.64 L7.30 14.69 L8.09 12.77 L5.00 9.75 L9.75 5.00 L12.77 8.09 L14.69 7.30 L14.64 2.97 L21.36 2.97 L21.31 7.30 L23.23 8.09 L26.25 5.00 L31.00 9.75 L27.91 12.77 L28.70 14.69 Z"/><circle cx="18" cy="18" r="4.3"/></g></svg>
<div class="t" style="left:366.75px;top:847.32px;font-size:13.5px;line-height:13.5px;color:#9d9d9d;">PROBLEMS</div>
<div class="r" style="left:455.5px;top:842.5px;width:23.5px;height:23.5px;border-radius:50%;background:#4d4d4f"></div>
<div class="t" style="left:463.00px;top:846.02px;font-size:14.5px;line-height:14.5px;color:#ffffff;">3</div>
<div class="t" style="left:507.40px;top:847.07px;font-size:13.8px;line-height:13.8px;color:#9d9d9d;">OUTPUT</div>
<div class="t" style="left:598.00px;top:847.32px;font-size:13.5px;line-height:13.5px;color:#9d9d9d;">DEBUG CONSOLE</div>
<div class="t" style="left:748.70px;top:847.15px;font-size:13.7px;line-height:13.7px;color:#e7e7e7;">TERMINAL</div>
<div class="r" style="left:746.00px;top:873.50px;width:74.70px;height:1.50px;background:#e0e0e0;"></div>
<div class="r" style="left:1451.00px;top:841.70px;width:222.70px;height:23.00px;background:#3a3a3c;border-radius:4px;"></div>
<div class="t" style="left:1463.00px;top:846.21px;font-size:15.7px;line-height:15.7px;color:#e0e0e0;">1: bash</div>
<svg class="r" style="left:1650.70px;top:849.50px;" width="12.5" height="7" viewBox="0 0 12.5 7"><path d="M0.7 0.7 L6.25 6.3 L11.8 0.7" fill="none" stroke="#d0d0d0" stroke-width="1.4" stroke-linecap="round" stroke-linejoin="round"/></svg>
<svg class="r" style="left:1684.00px;top:844.00px;" width="18" height="18" viewBox="0 0 18 18"><path d="M9 0.5 V17.5 M0.5 9 H17.5" stroke="#c5c5c5" stroke-width="1.4"/></svg>
<svg class="r" style="left:1709.00px;top:850.50px;" width="9.5" height="5.5" viewBox="0 0 9.5 5.5"><path d="M0.6 0.6 L4.75 4.9 L8.9 0.6" fill="none" stroke="#c5c5c5" stroke-width="1.2"/></svg>
<svg class="r" style="left:1735.50px;top:844.50px;" width="17" height="17" viewBox="0 0 17 17"><rect x="0.75" y="0.75" width="15.5" height="15.5" rx="1.5" fill="none" stroke="#c5c5c5" stroke-width="1.5"/><path d="M8.5 0.75 V16.25" stroke="#c5c5c5" stroke-width="1.5"/></svg>
<svg class="r" style="left:1770.00px;top:844.00px;" width="15" height="18" viewBox="0 0 15 18"><g fill="none" stroke="#c5c5c5" stroke-width="1.4"><path d="M0.5 3.5 H14.5 M5 3.5 V1 H10 V3.5"/><path d="M2 3.5 V17 H13 V3.5"/><path d="M5.5 6 V14.5 M7.5 6 V14.5 M9.5 6 V14.5"/></g></svg>
<svg class="r" style="left:1805.00px;top:848.50px;" width="14" height="8" viewBox="0 0 14 8"><path d="M0.7 7.3 L7 0.9 L13.3 7.3" fill="none" stroke="#c5c5c5" stroke-width="1.4"/></svg>
<svg class="r" style="left:1840.00px;top:847.50px;" width="11.5" height="11.5" viewBox="0 0 11.5 11.5"><path d="M0.7 0.7 L10.8 10.8 M10.8 0.7 L0.7 10.8" stroke="#c5c5c5" stroke-width="1.5"/></svg>
<div class="t" style="left:363.50px;top:917.29px;font-size:15.16px;line-height:15.16px;color:#e6e6e6;font-family:'Liberation Mono', monospace;">The default interactive shell is now zsh.</div>
<div class="t" style="left:363.50px;top:936.69px;font-size:15.16px;line-height:15.16px;color:#e6e6e6;font-family:'Liberation Mono', monospace;">To update your account to use zsh, please run `chsh -s /bin/zsh`.</div>
<div class="t" style="left:363.50px;top:955.89px;font-size:15.16px;line-height:15.16px;color:#e6e6e6;font-family:'Liberation Mono', monospace;">For more details, please visit https://support.apple.com/kb/HT208050.</div>
<div class="t" style="left:363.50px;top:975.29px;font-size:15.16px;line-height:15.16px;color:#e6e6e6;font-family:'Liberation Mono', monospace;">Chirags-MacBook-Pro:learnify chirag$ </div>
<div class="r" style="left:700.30px;top:971.30px;width:10.00px;height:19.50px;background:transparent;box-sizing:border-box;border:1px solid #b0b0b0;"></div>
<svg class="r" style="left:56.00px;top:1054.00px;" width="20" height="20" viewBox="0 0 20 20"><path d="M4.3 7 L9.6 11.8 L4.3 16.6 M15.8 2.8 L10.5 7.6 L15.8 12.4" fill="none" stroke="#c8f2d8" stroke-width="1.5" stroke-linecap="round"/></svg>
<svg class="r" style="left:99.50px;top:1056.00px;" width="18" height="18" viewBox="0 0 18 18"><g fill="none" stroke="#ffffff" stroke-width="1.4"><circle cx="8.6" cy="8.6" r="7.6"/><path d="M5.5 5.5 L11.7 11.7 M11.7 5.5 L5.5 11.7"/></g></svg>
<div class="t" style="left:121.70px;top:1057.91px;font-size:15.7px;line-height:15.7px;color:#ffffff;">2</div>
<svg class="r" style="left:135.00px;top:1057.00px;" width="18" height="15" viewBox="0 0 18 15"><g fill="none" stroke="#ffffff" stroke-width="1.4" stroke-linejoin="round"><path d="M8.7 1 L16.6 14.2 H0.8 Z"/><path d="M8.7 5.5 V10 M8.7 11.5 V12.8"/></g></svg>
<div class="t" style="left:157.00px;top:1057.91px;font-size:15.7px;line-height:15.7px;color:#ffffff;">1</div>
<svg class="r" style="left:187.50px;top:1056.00px;" width="14" height="17" viewBox="0 0 14 17"><path d="M7 1 Q13 6 12.8 11 Q12.5 16 7 16.2 Q1.5 16 1.2 11 Q1 7.5 4 5 Q4 8 6 9 Q5.5 4.5 7 1 Z M7 16 Q4.5 14 5.5 11.5 Q7 13 8 10.5 Q10 13 7 16" fill="none" stroke="#ffffff" stroke-width="1.3" stroke-linejoin="round"/></svg>
<svg class="r" style="left:225.00px;top:1057.50px;" width="18" height="14" viewBox="0 0 18 14"><g fill="none" stroke="#ffffff" stroke-width="1.4"><path d="M0.8 0.8 H7 L8.5 2.5 H17.2 V13.2 H0.8 Z"/><path d="M0.8 4.8 H17.2"/></g></svg>
<div class="t" style="left:246.70px;top:1057.91px;font-size:15.7px;line-height:15.7px;color:#ffffff;">learnify.sln</div>
<div class="t" style="left:1177.00px;top:1057.91px;font-size:15.7px;line-height:15.7px;color:#ffffff;">Ln 15, Col 97</div>
<div class="t" style="left:1289.50px;top:1057.91px;font-size:15.7px;line-height:15.7px;color:#ffffff;">Spaces: 4</div>
<div class="t" style="left:1380.00px;top:1057.91px;font-size:15.7px;line-height:15.7px;color:#ffffff;">UTF-8</div>
<div class="t" style="left:1447.00px;top:1057.91px;font-size:15.7px;line-height:15.7px;color:#ffffff;">LF</div>
<div class="t" style="left:1485.50px;top:1057.91px;font-size:15.7px;line-height:15.7px;color:#ffffff;">C#</div>
<div class="t" style="left:1527.00px;top:1057.91px;font-size:15.7px;line-height:15.7px;color:#ffffff;">AWS: (not connected)</div>
<svg class="r" style="left:1703.50px;top:1056.00px;" width="16" height="18" viewBox="0 0 16 18"><g fill="none" stroke="#ffffff" stroke-width="1.3"><path d="M3.5 12.5 A6.5 6.5 0 1 1 12.5 12.5"/><path d="M5.5 10 A3.5 3.5 0 1 1 10.5 10"/></g><circle cx="8" cy="7.5" r="1.3" fill="#ffffff"/><path d="M8 9 V17" stroke="#ffffff" stroke-width="2"/></svg>
<div class="t" style="left:1724.80px;top:1057.91px;font-size:15.7px;line-height:15.7px;color:#ffffff;">Go Live</div>
<svg class="r" style="left:1799.00px;top:1056.00px;" width="18" height="17" viewBox="0 0 18 17"><g fill="none" stroke="#ffffff" stroke-width="1.3"><path d="M6 1 H17 V8.5 H12.5 L10 11"/><circle cx="5.5" cy="8.5" r="3"/><path d="M0.8 16.5 Q1.5 12.5 5.5 12.5 Q9.5 12.5 10.2 16.5"/></g></svg>
<svg class="r" style="left:1839.50px;top:1056.00px;" width="15" height="18" viewBox="0 0 15 18"><g fill="none" stroke="#ffffff" stroke-width="1.3" stroke-linejoin="round"><path d="M7.5 1.5 Q12.5 1.5 12.5 7 V12 L14.2 14.2 H0.8 L2.5 12 V7 Q2.5 1.5 7.5 1.5 Z"/><path d="M5.5 15.5 Q7.5 17.8 9.5 15.5"/></g></svg>
</body></html>
